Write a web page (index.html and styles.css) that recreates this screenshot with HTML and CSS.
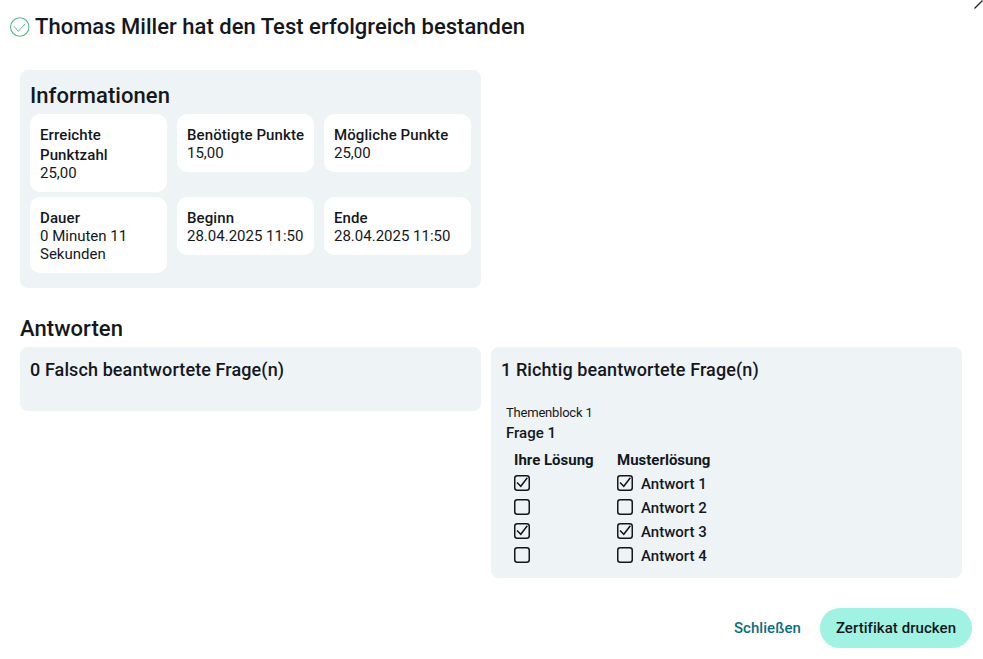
FILE: index.html
```html
<!DOCTYPE html>
<html lang="de">
<head>
  <meta charset="UTF-8">
  <title>Testergebnis</title>
  <link rel="stylesheet" href="styles.css">
</head>
<body>
  <div id="root">
    <svg class="corner-x" width="9" height="9" viewBox="0 0 9 9"><path d="M0.5 8.5L8.5 0.5" stroke="#222" stroke-width="1.2" fill="none"/></svg>

    <header class="title-row">
      <svg class="title-icon" width="20" height="20" viewBox="0 0 20 20" fill="none">
        <circle cx="9.75" cy="10" r="9.2" stroke="#5cb88a" stroke-width="1.1"/>
        <path d="M4 9.3L8.3 14.3L15 7" stroke="#5cb88a" stroke-width="1"/>
      </svg>
      <h1>Thomas Miller hat den Test erfolgreich bestanden</h1>
    </header>

    <section class="info-panel">
      <h2>Informationen</h2>
      <div class="info-grid">
        <div class="info-card"><b>Erreichte Punktzahl</b><span>25,00</span></div>
        <div class="info-card"><b>Benötigte Punkte</b><span>15,00</span></div>
        <div class="info-card"><b>Mögliche Punkte</b><span>25,00</span></div>
        <div class="info-card"><b>Dauer</b><span>0 Minuten 11 Sekunden</span></div>
        <div class="info-card"><b>Beginn</b><span>28.04.2025 11:50</span></div>
        <div class="info-card"><b>Ende</b><span>28.04.2025 11:50</span></div>
      </div>
    </section>

    <h2 class="answers-title">Antworten</h2>
    <div class="answers">
      <section class="answer-panel wrong-panel">
        <h3>0 Falsch beantwortete Frage(n)</h3>
      </section>
      <section class="answer-panel">
        <h3>1 Richtig beantwortete Frage(n)</h3>
        <div class="topic">Themenblock 1</div>
        <div class="question">Frage 1</div>
        <div class="solution">
          <div class="solution-col own-col">
            <div class="solution-head">Ihre Lösung</div>
            <div class="check-row"><svg class="box" viewBox="0 0 16 16"><rect x="0.75" y="0.75" width="14.5" height="14.5" rx="2.5"/><path d="M3 7.5L6.8 11.3L13.3 2.8"/></svg></div>
            <div class="check-row"><svg class="box" viewBox="0 0 16 16"><rect x="0.75" y="0.75" width="14.5" height="14.5" rx="2.5"/></svg></div>
            <div class="check-row"><svg class="box" viewBox="0 0 16 16"><rect x="0.75" y="0.75" width="14.5" height="14.5" rx="2.5"/><path d="M3 7.5L6.8 11.3L13.3 2.8"/></svg></div>
            <div class="check-row"><svg class="box" viewBox="0 0 16 16"><rect x="0.75" y="0.75" width="14.5" height="14.5" rx="2.5"/></svg></div>
          </div>
          <div class="solution-col">
            <div class="solution-head">Musterlösung</div>
            <div class="check-row"><svg class="box" viewBox="0 0 16 16"><rect x="0.75" y="0.75" width="14.5" height="14.5" rx="2.5"/><path d="M3 7.5L6.8 11.3L13.3 2.8"/></svg><span>Antwort 1</span></div>
            <div class="check-row"><svg class="box" viewBox="0 0 16 16"><rect x="0.75" y="0.75" width="14.5" height="14.5" rx="2.5"/></svg><span>Antwort 2</span></div>
            <div class="check-row"><svg class="box" viewBox="0 0 16 16"><rect x="0.75" y="0.75" width="14.5" height="14.5" rx="2.5"/><path d="M3 7.5L6.8 11.3L13.3 2.8"/></svg><span>Antwort 3</span></div>
            <div class="check-row"><svg class="box" viewBox="0 0 16 16"><rect x="0.75" y="0.75" width="14.5" height="14.5" rx="2.5"/></svg><span>Antwort 4</span></div>
          </div>
        </div>
      </section>
    </div>

    <footer class="actions">
      <button class="btn-close">Schließen</button>
      <button class="btn-print">Zertifikat drucken</button>
    </footer>
  </div>
</body>
</html>
```

FILE: styles.css
```css
* {margin:0; padding:0; box-sizing: border-box;}
html, body {height: 100%; background: #fff; overflow: hidden;}
body {
  font-family: Roboto, "Liberation Sans", sans-serif;
  color: #14181d;
  font-size: 15px;
}
#root {
  position: relative;
  width: 983px;
  height: 659px;
  padding: 14px 11px 0 20px;
}
.corner-x {position: absolute; top: 0; right: 0;}

/* header */
.title-row {
  display: flex;
  align-items: center;
  gap: 5px;
  margin-left: -10px;
  height: 26px;
}
h1 {font-size: 22px; font-weight: 500; line-height: 26px; letter-spacing: 0.02px;}
h2 {font-size: 22px; font-weight: 500; line-height: 26px; letter-spacing: 0.06px;}
h3 {font-size: 18px; font-weight: 500; line-height: 22px; letter-spacing: 0.1px;}

/* info */
.info-panel {
  width: 461px;
  height: 218px;
  margin-top: 30px;
  padding: 13px 10px 12px;
  background: #eef3f6;
  border-radius: 8px;
}
.info-grid {
  display: grid;
  grid-template-columns: 137px 137px 147px;
  column-gap: 10px;
  row-gap: 5px;
  margin-top: 5px;
  align-items: start;
}
.info-card {
  background: #fff;
  border-radius: 10px;
  padding: 11px 8px 10px 10px;
  line-height: 20px;
}
.info-card b {display: block; font-weight: 500; letter-spacing: 0.1px;}
.info-card span {display: block; line-height: 18px; margin-top: -1px;}

/* answers */
.answers-title {margin-top: 28px;}
.answers {
  display: flex;
  align-items: flex-start;
  gap: 10px;
  margin-top: 5px;
}
.answer-panel {
  width: 471px;
  padding: 12px 10px 10px;
  background: #eef3f6;
  border-radius: 8px;
}
.wrong-panel {width: 461px; height: 64px;}
.topic {font-size: 13px; line-height: 16px; margin: 24px 0 0 5px; letter-spacing: -0.2px;}
.question {font-size: 15px; font-weight: 500; line-height: 20px; margin: 2px 0 0 5px;}
.solution {display: flex; margin: 7px 0 0 13px;}
.own-col {width: 103px;}
.solution-head {font-size: 15px; font-weight: 700; line-height: 20px; margin-bottom: 2px;}
.check-row {
  display: flex;
  align-items: center;
  gap: 8px;
  height: 24px;
  font-weight: 500;
}
.box {width: 16px; height: 16px; margin-bottom: 2px; fill: none; stroke: #14181d; stroke-width: 1.5;}

/* footer */
.actions {
  display: flex;
  justify-content: flex-end;
  align-items: center;
  gap: 19px;
  margin-top: 30px;
}
button {font-family: inherit; font-size: 15px; font-weight: 500; border: 0; cursor: pointer; letter-spacing: 0.06px;}
.btn-close {background: none; color: #0b6f80;}
.btn-print {
  width: 152px;
  height: 40px;
  background: #a0f2e2;
  color: #14181d;
  border-radius: 20px;
}
```
